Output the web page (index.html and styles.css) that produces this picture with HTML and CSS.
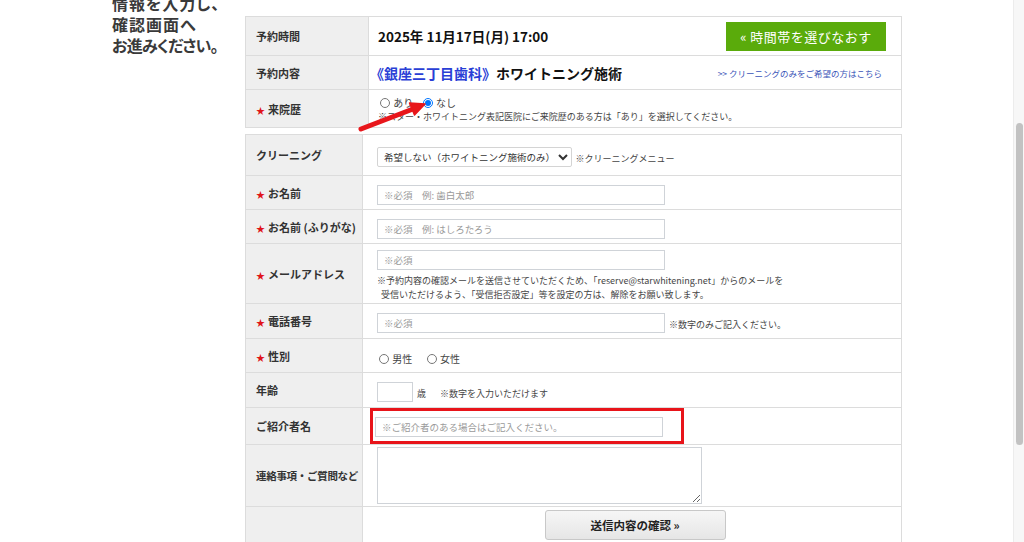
FILE: index.html
```html
<!DOCTYPE html>
<html lang="ja">
<head>
  <meta charset="UTF-8">
  <meta name="viewport" content="width=device-width, initial-scale=1.0">
  <title>ご予約フォーム</title>
  <link rel="stylesheet" href="styles.css">
</head>
<body>
  <div class="screen">
    <div class="page">
      <div class="intro">
        <p>情報を入力し、<br>確認画面へ<br><span class="narrow">お進みください。</span></p>
      </div>

      <div class="form">
        <table class="summary">
          <tr class="h39">
            <th>予約時間</th>
            <td>
              <div class="time-row">
                <span class="date">2025年 11月17日(月) 17:00</span>
                <a class="btn-green" href="#">« 時間帯を選びなおす</a>
              </div>
            </td>
          </tr>
          <tr class="h34">
            <th>予約内容</th>
            <td>
              <div class="time-row">
                <span class="menu"><span class="clinic">《銀座三丁目歯科》</span>ホワイトニング施術</span>
                <a class="small-link" href="#">&gt;&gt; クリーニングのみをご希望の方はこちら</a>
              </div>
            </td>
          </tr>
          <tr class="h38">
            <th><span class="req">★</span>来院歴</th>
            <td class="visit">
              <label class="radio"><input type="radio" name="visit"> あり</label>
              <label class="radio"><input type="radio" name="visit" checked> なし</label>
              <div class="note">※スター・ホワイトニング表記医院にご来院歴のある方は「あり」を選択してください。</div>
              <svg class="arrow" width="80" height="40" viewBox="0 0 80 40">
                <path d="M10 33 L62 13" stroke="#e8161b" stroke-width="5" stroke-linecap="round"/>
                <path d="M74 8 L63.5 19 L58.5 7 Z" fill="#e8161b" stroke="#e8161b" stroke-width="1.5" stroke-linejoin="round"/>
              </svg>
            </td>
          </tr>
        </table>

        <table class="details">
          <tr class="h41">
            <th>クリーニング</th>
            <td>
              <select class="select">
                <option>希望しない（ホワイトニング施術のみ）</option>
              </select>
              <span class="note">※クリーニングメニュー</span>
            </td>
          </tr>
          <tr class="h34">
            <th><span class="req">★</span>お名前</th>
            <td><input class="text" type="text" placeholder="※必須　例: 歯白太郎"></td>
          </tr>
          <tr class="h34">
            <th><span class="req">★</span>お名前 (ふりがな)</th>
            <td><input class="text" type="text" placeholder="※必須　例: はしろたろう"></td>
          </tr>
          <tr class="h60">
            <th><span class="req">★</span>メールアドレス</th>
            <td>
              <input class="text" type="text" placeholder="※必須">
              <div class="note mail-note">※予約内容の確認メールを送信させていただくため、「reserve@starwhitening.net」からのメールを<br>&nbsp;&nbsp;受信いただけるよう、「受信拒否設定」等を設定の方は、解除をお願い致します。</div>
            </td>
          </tr>
          <tr class="h35">
            <th><span class="req">★</span>電話番号</th>
            <td><input class="text" type="text" placeholder="※必須"><span class="note">※数字のみご記入ください。</span></td>
          </tr>
          <tr class="h34">
            <th><span class="req">★</span>性別</th>
            <td>
              <label class="radio gender"><input type="radio" name="sex"> 男性</label>
              <label class="radio gender"><input type="radio" name="sex"> 女性</label>
            </td>
          </tr>
          <tr class="h35">
            <th>年齢</th>
            <td><input class="text age" type="text"><span class="note unit">歳</span><span class="note">※数字を入力いただけます</span></td>
          </tr>
          <tr class="h35">
            <th>ご紹介者名</th>
            <td><span class="highlight"><input class="text" type="text" placeholder="※ご紹介者のある場合はご記入ください。"></span></td>
          </tr>
          <tr class="h62">
            <th class="tight">連絡事項・ご質問など</th>
            <td><textarea class="area"></textarea></td>
          </tr>
          <tr class="h40">
            <th></th>
            <td class="submit-cell"><button class="btn-submit" type="button">送信内容の確認 »</button></td>
          </tr>
        </table>
      </div>
    </div>

    <div class="scrollbar"><div class="thumb"></div></div>
  </div>
</body>
</html>
```

FILE: styles.css
```css
html, body {
  margin: 0;
  height: 542px;
  overflow: hidden;
  background-color: #ffffff;
}
body {
  font-family: "Noto Sans CJK JP", "Noto Sans", sans-serif;
  color: #222;
}
.screen {
  display: flex;
  height: 542px;
}
.page {
  flex: 1;
  display: flex;
  padding-left: 112px;
}
.intro {
  width: 133px;
  margin-top: -7px;
}
.intro p {
  margin: 0;
  font-size: 16px;
  line-height: 21px;
  font-weight: 700;
  color: #3a3a3a;
  letter-spacing: 1px;
  font-feature-settings: "palt";
}
.intro .narrow {
  letter-spacing: -0.8px;
}
.form {
  width: 657px;
  padding-top: 16px;
}
table {
  width: 100%;
  border-collapse: collapse;
  border: 1px solid #dcdcdc;
}
th, td {
  border-top: 1px solid #dcdcdc;
  border-bottom: 1px solid #dcdcdc;
  padding: 0;
  text-align: left;
  vertical-align: middle;
}
th {
  background-color: #efefef;
  font-size: 11px;
  font-weight: 700;
  color: #333;
  padding-left: 10px;
  border-right: 1px solid #dcdcdc;
  white-space: nowrap;
}
th.tight {
  font-size: 10.5px;
  letter-spacing: -0.3px;
}
.summary th {
  width: 112px;
}
.summary td {
  padding-left: 9px;
  padding-right: 15px;
}
.details {
  margin-top: 6px;
}
.details th {
  width: 106px;
}
.details td {
  padding-left: 14px;
}
.h34 { height: 34px; }
.h35 { height: 35px; }
.h38 { height: 38px; }
.h39 { height: 39px; }
.h40 { height: 40px; }
.h41 { height: 41px; }
.h60 { height: 60px; }
.h62 { height: 62px; }

.req {
  color: #e0141a;
  font-size: 9px;
  margin-right: 3px;
}
.time-row {
  display: flex;
  align-items: center;
  justify-content: space-between;
}
.date {
  font-size: 13.5px;
  font-weight: 700;
  color: #111;
}
.btn-green {
  display: flex;
  align-items: center;
  justify-content: center;
  width: 160px;
  height: 29px;
  background-color: #5aab0b;
  color: #ffffff;
  font-size: 13px;
  text-decoration: none;
  letter-spacing: 0.5px;
}
.menu {
  font-size: 14px;
  font-weight: 700;
  color: #111;
  margin-left: -8px;
}
.clinic {
  color: #2a3fd6;
}
.small-link {
  font-size: 8.5px;
  color: #3b55b8;
  text-decoration: none;
  margin-right: 4px;
}
.visit {
  position: relative;
  line-height: 14px;
}
.radio {
  font-size: 10px;
  color: #444;
  margin-right: 4px;
}
.radio input {
  width: 10px;
  height: 10px;
  margin: 0 1px 0 2px;
  vertical-align: -1px;
}
.gender {
  margin-right: 9px;
}
.note {
  font-size: 9px;
  color: #444;
  line-height: 14px;
}
.arrow {
  position: absolute;
  left: -18px;
  top: 6px;
}
.select {
  width: 195px;
  height: 20px;
  font-family: inherit;
  font-size: 9.5px;
  color: #333;
  border: 1px solid #d4d4d4;
  border-radius: 2px;
  background-color: #ffffff;
  padding: 0 2px;
  vertical-align: middle;
}
.text {
  box-sizing: border-box;
  width: 288px;
  height: 20px;
  border: 1px solid #cfd3d8;
  font-family: inherit;
  font-size: 9.5px;
  padding: 0 6px;
  margin: 0 4px 0 0;
  vertical-align: middle;
  outline: none;
}
.text::placeholder {
  color: #9a9a9a;
}
.mail-note {
  margin-top: 4px;
}
.age {
  width: 36px;
}
.unit {
  margin-right: 14px;
}
.highlight {
  display: inline-block;
  border: 3px solid #e8141a;
  padding: 6px 18px 4px 2px;
  margin-left: -7px;
  line-height: 0;
}
.highlight .text {
  margin: 0;
}
.area {
  box-sizing: border-box;
  width: 325px;
  height: 57px;
  border: 1px solid #cfd3d8;
  display: block;
  resize: vertical;
}
.details td.submit-cell {
  text-align: center;
  vertical-align: top;
  padding-top: 3px;
  padding-left: 0;
}
.btn-submit {
  width: 181px;
  height: 30px;
  border: 1px solid #c8c8c8;
  border-radius: 3px;
  background: linear-gradient(#f6f6f6, #e6e6e6);
  font-family: inherit;
  font-size: 11.5px;
  font-weight: 700;
  color: #222;
  margin-left: 6px;
}
.scrollbar {
  width: 10px;
  margin-left: auto;
  background-color: #f7f7f7;
  border-left: 1px solid #ececec;
  padding-top: 123px;
}
.thumb {
  width: 7px;
  height: 322px;
  margin-left: 2px;
  background-color: #c2c2c2;
  border-radius: 4px;
}
```
